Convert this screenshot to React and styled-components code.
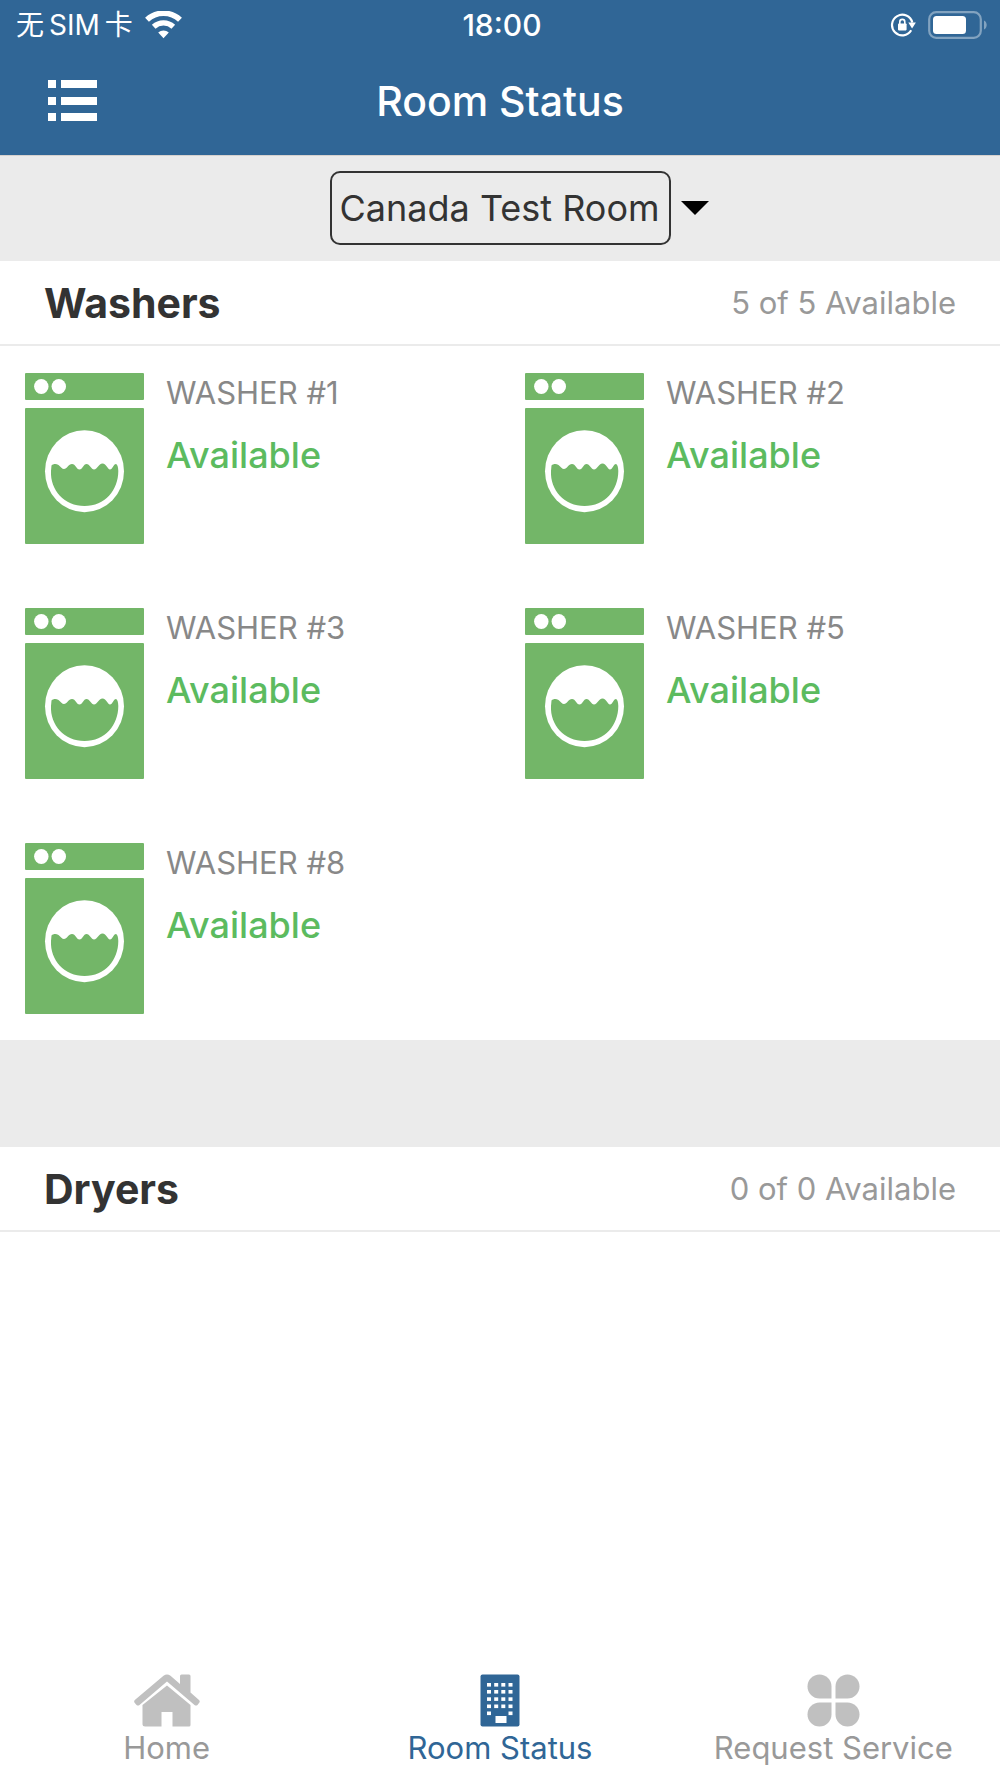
import React, { useState } from "react";
import styled, { createGlobalStyle } from "styled-components";

const BLUE = "#306696";
const GREEN = "#73b668";
const PANEL = "#ebebeb";

const GlobalStyle = createGlobalStyle`
  *, *::before, *::after { box-sizing: border-box; }
  body {
    margin: 0;
    background: #fff;
    color: #333;
    font-family: Inter, "Noto Sans CJK SC", sans-serif;
  }
  button, select { font-family: inherit; }
`;

const Screen = styled.div`
  display: flex;
  flex-direction: column;
  min-height: 100vh;
`;

const Header = styled.header`
  background: ${BLUE};
  color: #fff;
  border-bottom: 1px solid #d6d1ce;
`;

const ThreeColumns = styled.div`
  display: grid;
  grid-template-columns: 1fr auto 1fr;
  align-items: center;
`;

const StatusBar = styled(ThreeColumns)`
  height: 50px;
  padding: 0 12px 0 16px;
`;

const Carrier = styled.div`
  display: flex;
  align-items: center;
  gap: 12px;
`;

const CarrierName = styled.span`
  display: flex;
  gap: 5px;
  font-size: 28px;
  line-height: 40px;
  font-weight: 400;
`;

const Clock = styled.time`
  font-size: 30px;
  line-height: 40px;
  font-weight: 500;
`;

const Indicators = styled.div`
  display: flex;
  justify-content: flex-end;
  align-items: center;
  gap: 12px;
`;

const TitleBar = styled(ThreeColumns)`
  height: 105px;
  padding: 0 40px 4px;
`;

const IconButton = styled.button`
  justify-self: start;
  display: flex;
  padding: 8px;
  border: 0;
  background: none;
  color: inherit;
  cursor: pointer;
`;

const Title = styled.h1`
  margin: 0;
  font-size: 41px;
  line-height: 52px;
  font-weight: 500;
`;

const RoomPicker = styled(ThreeColumns)`
  height: 105px;
  padding-bottom: 2px;
  background: ${PANEL};
`;

const RoomSelect = styled.select`
  grid-column: 2;
  appearance: none;
  height: 74px;
  padding: 0 8px;
  border: 2px solid #333;
  border-radius: 10px;
  background: transparent;
  color: #333;
  font-size: 36px;
`;

const Arrow = styled.svg`
  margin-left: 10px;
`;

const SectionHeader = styled.div`
  display: flex;
  justify-content: space-between;
  align-items: center;
  height: 85px;
  padding: 0 44px;
  border-bottom: 2px solid ${PANEL};
`;

const SectionTitle = styled.h2`
  margin: 0;
  font-size: 41px;
  line-height: 52px;
  font-weight: 700;
`;

const Count = styled.span`
  color: #999;
  font-size: 31px;
  line-height: 40px;
`;

const MachineGrid = styled.ul`
  display: grid;
  grid-template-columns: 1fr 1fr;
  row-gap: 64px;
  margin: 0;
  padding: 27px 0 26px;
  list-style: none;
`;

const Machine = styled.li`
  display: flex;
  gap: 22px;
  padding-left: 25px;
`;

const MachineInfo = styled.div`
  display: flex;
  flex-direction: column;
  gap: 19px;
`;

const MachineName = styled.span`
  color: #888;
  font-size: 31px;
  line-height: 40px;
`;

const MachineState = styled.span`
  color: #5cbb5f;
  font-size: 36px;
  line-height: 46px;
  font-weight: 500;
`;

const Divider = styled.div`
  height: 107px;
  background: ${PANEL};
`;

const TabBar = styled.nav`
  display: grid;
  grid-template-columns: repeat(3, 1fr);
  margin-top: auto;
  padding-bottom: 9px;
`;

const Tab = styled.a`
  display: flex;
  flex-direction: column;
  align-items: center;
  color: ${(p) => (p.$active ? BLUE : "#999")};
  font-size: 31px;
  line-height: 42px;
  text-decoration: none;
  svg { color: ${(p) => (p.$active ? BLUE : "#c0c0c0")}; }
`;

const WifiIcon = () => (
  <svg width="37" height="28" viewBox="0 0 37 28" fill="none" aria-hidden="true">
    <path d="M2 8.800a24 24 0 0 1 33 0" stroke="#fff" strokeWidth="5.6" />
    <path d="M8.700 15.700a14.500 14.500 0 0 1 19.600 0" stroke="#fff" strokeWidth="5.4" />
    <path d="M13.200 21.500a8 8 0 0 1 10.600 0L18.500 27.200Z" fill="#fff" />
  </svg>
);

const RotationLockIcon = () => (
  <svg width="26" height="24" viewBox="0 0 26 24" fill="none" aria-hidden="true">
    <path d="M21.200 17.300a10.300 10.300 0 1 1 1.100-7.800" stroke="#fff" strokeWidth="2.2" />
    <path d="M18.300 9.400h7.600l-3.800 6Z" fill="#fff" />
    <rect x="8" y="10.4" width="8.6" height="7" rx="0.8" fill="#fff" />
    <path d="M9.800 11V8.900a2.500 2.500 0 0 1 5 0V11" stroke="#fff" strokeWidth="1.6" />
  </svg>
);

const BatteryIcon = () => (
  <svg width="60" height="28" viewBox="0 0 60 28" fill="none" aria-hidden="true">
    <rect x="1.2" y="1.2" width="51.6" height="25.6" rx="7" stroke="#82a3c0" strokeWidth="2.2" />
    <rect x="5" y="5" width="33" height="18" rx="3.5" fill="#fff" />
    <path d="M56 9.5c3.6 1.6 3.6 7.4 0 9Z" fill="#82a3c0" />
  </svg>
);

const ListIcon = () => (
  <svg width="49" height="41" viewBox="0 0 49 41" fill="currentColor" aria-hidden="true">
    {[0, 17, 33].map((y) => (
      <g key={y}>
        <rect x="0" y={y} width="8" height="8" />
        <rect x="13" y={y} width="36" height="8" />
      </g>
    ))}
  </svg>
);

const WasherIcon = () => (
  <svg width="119" height="171" viewBox="0 0 119 171" aria-hidden="true">
    <rect width="119" height="27" rx="1" fill={GREEN} />
    <ellipse cx="16.3" cy="13.5" rx="7.2" ry="7.5" fill="#fff" />
    <ellipse cx="33.8" cy="13.5" rx="7.2" ry="7.5" fill="#fff" />
    <rect y="35" width="119" height="136" rx="1" fill={GREEN} />
    <ellipse cx="59.5" cy="98.2" rx="39.5" ry="41" fill="#fff" />
    <path
      d="M26.500 92.500C28 91 31 90.500 33.500 92C36 94 37 96 39 96C42 96 43.500 91 47 91C50.500 91 51.500 96.500 54.500 96.500C57.500 96.500 58.500 91 61.500 91C64.500 91 66.500 96.500 69 96.500C72.500 96.500 73.500 90.500 77.500 90.500C81.500 90.500 82.500 96.500 85 96.500C87.500 96.500 88.500 91 91 91C92.500 91.500 93.200 94 93.300 98C93.300 117 80 133 59.500 133C39.500 133 25 117 26 98Z"
      fill={GREEN}
    />
  </svg>
);

const HomeIcon = () => (
  <svg width="66" height="53" viewBox="0 0 66 53" fill="currentColor" aria-hidden="true">
    <path d="M46 10V2q0-1.500 1.500-1.500H55q1.500 0 1.500 1.500V18.500L65 26q1.500 1.500 0 3l-1.500 2q-1.500 1-3 0L33 7.500 5.500 31q-1.500 1-3 0L.8 29q-1.300-1.500 0-3L29.500 1.700q3.500-2.500 7 0Z" />
    <path d="M33 11.500 56.500 31V51q0 1.500-1.500 1.500H38.500V38H27.500V52.500H11q-2.500 0-2.500-2V31Z" />
  </svg>
);

const BuildingIcon = () => (
  <svg width="40" height="53" viewBox="0 0 40 53" aria-hidden="true">
    <rect x="0.500" y="0.500" width="39" height="52" rx="2" fill="currentColor" />
    {[9, 16, 23.300, 30.500, 37.500].map((y, row) =>
      [7, 14.200, 21.300, 28.500].map((x, col) =>
        row === 4 && (col === 1 || col === 2) ? null : (
          <rect key={`${x}-${y}`} x={x} y={y} width="4" height="3.600" fill="#fff" />
        )
      )
    )}
    <rect x="15.500" y="42" width="11" height="7" fill="#fff" />
  </svg>
);

const CloverIcon = () => (
  <svg width="53" height="53" viewBox="0 0 53 53" fill="currentColor" aria-hidden="true">
    <path d="M24.500 24.500H12.500A12 12 0 1 1 24.500 12.500Z" />
    <path d="M28.500 24.500V12.500A12 12 0 1 1 40.500 24.500Z" />
    <path d="M24.500 28.500V40.500A12 12 0 1 1 12.500 28.500Z" />
    <path d="M28.500 28.500H40.500A12 12 0 1 1 28.500 40.500Z" />
  </svg>
);

const SECTIONS = [
  { title: "Washers", label: "WASHER", machines: [1, 2, 3, 5, 8] },
  { title: "Dryers", label: "DRYER", machines: [] },
];

const TABS = [
  { label: "Home", Icon: HomeIcon },
  { label: "Room Status", Icon: BuildingIcon, active: true },
  { label: "Request Service", Icon: CloverIcon },
];

function Section({ title, label, machines }) {
  return (
    <section>
      <SectionHeader>
        <SectionTitle>{title}</SectionTitle>
        <Count>{`${machines.length} of ${machines.length} Available`}</Count>
      </SectionHeader>
      {machines.length > 0 && (
        <MachineGrid>
          {machines.map((n) => (
            <Machine key={n}>
              <WasherIcon />
              <MachineInfo>
                <MachineName>{`${label} #${n}`}</MachineName>
                <MachineState>Available</MachineState>
              </MachineInfo>
            </Machine>
          ))}
        </MachineGrid>
      )}
    </section>
  );
}

export default function App() {
  const [room, setRoom] = useState("Canada Test Room");
  return (
    <Screen>
      <GlobalStyle />
      <Header>
        <StatusBar>
          <Carrier>
            <CarrierName>
              <span>无</span>
              <span>SIM</span>
              <span>卡</span>
            </CarrierName>
            <WifiIcon />
          </Carrier>
          <Clock>18:00</Clock>
          <Indicators>
            <RotationLockIcon />
            <BatteryIcon />
          </Indicators>
        </StatusBar>
        <TitleBar>
          <IconButton type="button" aria-label="Menu">
            <ListIcon />
          </IconButton>
          <Title>Room Status</Title>
        </TitleBar>
      </Header>
      <main>
        <RoomPicker>
          <RoomSelect aria-label="Room" value={room} onChange={(e) => setRoom(e.target.value)}>
            <option>Canada Test Room</option>
          </RoomSelect>
          <Arrow width="28" height="14" viewBox="0 0 28 14" aria-hidden="true">
            <path d="M0 0H28L14 14Z" fill="#000" />
          </Arrow>
        </RoomPicker>
        <Section {...SECTIONS[0]} />
        <Divider />
        <Section {...SECTIONS[1]} />
      </main>
      <TabBar>
        {TABS.map(({ label, Icon, active }) => (
          <Tab key={label} href="#" $active={active} aria-current={active ? "page" : undefined}>
            <Icon />
            {label}
          </Tab>
        ))}
      </TabBar>
    </Screen>
  );
}
